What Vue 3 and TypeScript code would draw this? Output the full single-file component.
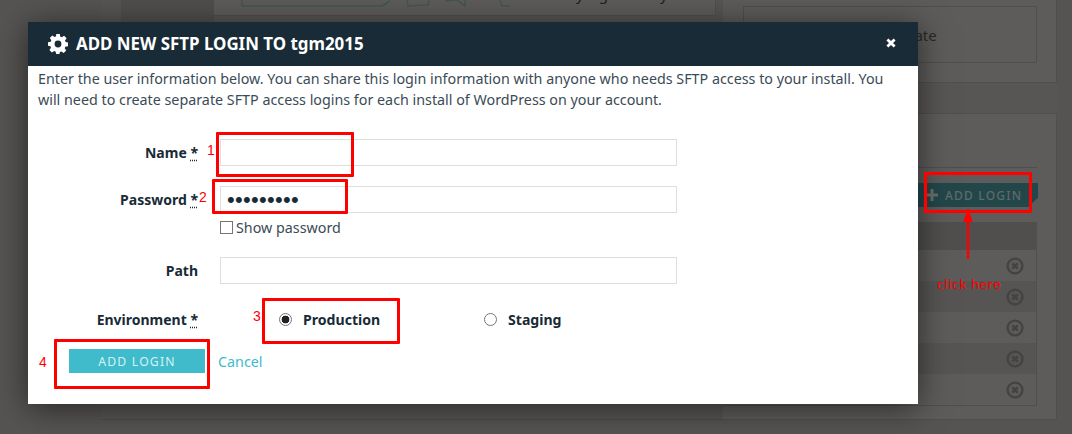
<script setup lang="ts">
const rows: number[] = [1, 2, 3, 4, 5]
</script>

<template>
  <div class="page">
    <div class="wrap">
      <aside class="sidebar"></aside>
      <main class="main">
        <div class="main-card">
          <svg class="drawing" width="310" height="8" viewBox="0 0 310 8" aria-hidden="true">
            <path d="M2 0V6H142L150 1M167 0L168 6L188 5L189 0M205 1L217 0L225 6V0M260 0L262 6H270" fill="none" stroke="#41584e" stroke-width="1.5" />
          </svg>
          <span class="cut-text"><i>y</i><i class="g">g</i><i class="y2">y</i></span>
        </div>
      </main>
      <div class="right">
        <section class="card card-top">
          <div class="inner-box"><span class="ghost">Update</span></div>
        </section>
        <section class="card card-logins">
          <div class="card-head"></div>
          <div class="add-row">
            <span class="add-bg">
              <svg width="12" height="12" viewBox="0 0 12 12" aria-hidden="true">
                <path d="M6 0V12M0 6H12" stroke="#6a6e6c" stroke-width="3" />
              </svg>
              ADD LOGIN
            </span>
          </div>
          <div class="table">
            <div class="thead"></div>
            <div v-for="r in rows" :key="r" class="trow" :class="{ alt: r % 2 === 0 }">
              <svg width="18" height="18" viewBox="0 0 18 18" aria-hidden="true">
                <circle cx="9" cy="9" r="7.4" fill="none" stroke="#444342" stroke-width="2.4" />
                <path d="M6.3 6.3L11.7 11.7M11.7 6.3L6.3 11.7" stroke="#444342" stroke-width="2.6" />
              </svg>
            </div>
          </div>
        </section>
      </div>
    </div>

    <div class="modal">
      <header class="modal-head">
        <svg class="gear" width="20" height="20" viewBox="0 0 20 20" aria-hidden="true">
          <path fill="#fff" fill-rule="evenodd" d="M8.2 0h3.6l.5 2.7 1.5.6 2.3-1.5 2.5 2.5-1.6 2.3.7 1.5 2.3.5v3.6l-2.7.5-.6 1.5 1.5 2.3-2.5 2.5-2.3-1.6-1.5.7-.5 2.3H8.2l-.5-2.7-1.5-.6-2.3 1.5-2.5-2.5 1.6-2.3-.7-1.5L0 11.8V8.2l2.7-.5.6-1.5-1.5-2.3 2.5-2.5 2.3 1.6 1.5-.7zM10 6.6a3.4 3.4 0 1 0 0 6.8 3.4 3.4 0 0 0 0-6.8z" />
        </svg>
        <h2 class="title">ADD NEW SFTP LOGIN TO tgm2015</h2>
        <svg class="close" width="10" height="10" viewBox="0 0 10 10" aria-hidden="true">
          <path d="M1.4 1.4L8.6 8.6M8.6 1.4L1.4 8.6" stroke="#fff" stroke-width="2.8" />
        </svg>
      </header>
      <div class="modal-body">
        <p class="intro">Enter the user information below. You can share this login information with anyone who needs SFTP access to your install. You will need to create separate SFTP access logins for each install of WordPress on your account.</p>
        <form class="form" @submit.prevent>
          <label class="lbl lbl-name">Name <abbr>*</abbr></label>
          <input class="field f-name" type="text" />
          <label class="lbl lbl-pass">Password <abbr>*</abbr></label>
          <div class="pass-cell">
            <input class="field f-pass" type="password" value="secretpw1" />
            <label class="show"><input type="checkbox" /><span>Show password</span></label>
          </div>
          <label class="lbl lbl-path">Path</label>
          <input class="field f-path" type="text" />
          <label class="lbl lbl-env">Environment <abbr>*</abbr></label>
          <div class="env">
            <label class="radio r-prod"><input type="radio" name="env" checked /><span>Production</span></label>
            <label class="radio"><input type="radio" name="env" /><span>Staging</span></label>
          </div>
        </form>
        <div class="actions">
          <button class="submit" type="button">ADD LOGIN</button>
          <a class="cancel">Cancel</a>
        </div>
      </div>
    </div>

    <div class="mark m1"></div>
    <div class="mark m2"></div>
    <div class="mark m3"></div>
    <div class="mark m4"></div>
    <div class="mark m5"></div>
    <span class="num n1">1</span>
    <span class="num n2">2</span>
    <span class="num n3">3</span>
    <span class="num n4">4</span>
    <svg class="arrow" width="12" height="52" viewBox="0 0 12 52" aria-hidden="true">
      <path d="M6 0L11 14H7.2V51H4.8V14H1z" fill="#f00" />
    </svg>
    <span class="click">click here</span>
  </div>
</template>

<style>
html, body { margin: 0; background: #555452; overflow: hidden; }
</style>

<style scoped>
.page {
  position: relative;
  width: 1072px;
  height: 434px;
  overflow: hidden;
  background: #555452;
  font-family: "Noto Sans", "Liberation Sans", sans-serif;
  padding-left: 100px;
  box-sizing: border-box;
}
.wrap {
  display: flex;
  width: 958px;
  height: 420px;
  box-sizing: border-box;
  padding-left: 20px;
  background: #575654;
  border-left: 1px solid #555452;
  border-right: 1px solid #555452;
  border-bottom: 1px solid #4d4c4a;
}
.sidebar {
  width: 93px;
  height: 404px;
  background: #504f4d;
  border-bottom: 1px solid #4d4c4a;
  box-sizing: border-box;
}
.main { width: 502px; }
.main-card {
  display: flex;
  height: 16px;
  box-sizing: border-box;
  overflow: hidden;
  border-bottom: 1px solid #504f4d;
  border-right: 1px solid #504f4d;
  background: #5d5c5a;
  padding-left: 26px;
}
.drawing { display: block; flex: none; }
.cut-text {
  display: flex;
  margin: -15px 0 0 26px;
  color: #1f1e1d;
  font-size: 15px;
  line-height: 18px;
}
.cut-text i { font-style: normal; }
.cut-text .g { margin-left: 15px; }
.cut-text .y2 { margin-left: 52px; }
.right { width: 341px; padding-left: 7px; box-sizing: border-box; }
.card {
  box-sizing: border-box;
  background: #5d5c5a;
  border-right: 1px solid #504f4d;
  border-bottom: 1px solid #504f4d;
}
.card-top {
  height: 83px;
  padding: 6px 19px 0 20px;
}
.inner-box {
  height: 57px;
  box-sizing: border-box;
  border: 1px solid #504f4d;
  display: flex;
  align-items: center;
  padding-left: 141px;
  color: #2a2928;
  font-size: 15px;
}
.ghost { white-space: nowrap; }
.card-logins {
  height: 307px;
  margin-top: 30px;
  border-top: 1px solid #504f4d;
  padding: 0 19px 0 0;
}
.card-head { height: 53px; border-bottom: 1px solid #504f4d; }
.add-row { display: flex; justify-content: flex-end; margin: 15px -1px 0 0; }
.add-bg {
  display: flex;
  align-items: center;
  gap: 7px;
  width: 121px;
  height: 24px;
  box-sizing: border-box;
  padding-left: 9px;
  background: #22474a;
  clip-path: polygon(0 0, 100% 0, 100% 60%, 92% 100%, 0 100%);
  color: #606a69;
  font-size: 12px;
  font-weight: 500;
  letter-spacing: 1.2px;
  white-space: nowrap;
}
.table { margin-top: 15px; border-bottom: 1px solid #504f4d; border-right: 1px solid #504f4d; }
.thead { height: 28px; background: #504f4d; }
.trow {
  height: 31px;
  display: flex;
  align-items: center;
  justify-content: flex-end;
  padding-right: 12px;
  background: #5d5c5a;
}
.trow.alt { background: #565553; }

.modal {
  position: absolute;
  left: 28px;
  top: 22px;
  width: 890px;
  height: 382px;
  background: #fff;
  box-shadow: 0 4px 30px rgba(0, 0, 0, 0.55);
  color: #182b36;
}
.modal-head {
  height: 44px;
  background: #182b36;
  display: flex;
  align-items: center;
  padding: 0 22px 0 20px;
  box-sizing: border-box;
}
.gear { flex: none; }
.title {
  margin: 0 0 0 8px;
  flex: 1;
  color: #fff;
  font-size: 16.9px;
  font-weight: 700;
  line-height: 44px;
  white-space: nowrap;
}
.close { flex: none; margin-top: -3px; }
.modal-body { padding: 2px 10px 0; }
.intro {
  margin: 0;
  width: 860px;
  font-size: 14.3px;
  line-height: 21px;
  color: #3b4b56;
}
.form {
  display: grid;
  grid-template-columns: 160px 457px;
  column-gap: 22px;
  margin-top: 29px;
  align-items: start;
}
.lbl {
  font-size: 14px;
  font-weight: 700;
  text-align: right;
  line-height: 28px;
  white-space: nowrap;
}
abbr { text-decoration: underline dotted; text-underline-offset: 2px; }
.field {
  display: block;
  width: 100%;
  height: 27px;
  box-sizing: border-box;
  border: 1px solid #dedede;
  background: #fff;
  padding: 0 6px;
  margin: 0;
  color: #182b36;
  font-size: 14px;
  outline: none;
}
.f-pass { font-size: 22px; letter-spacing: 0.3px; }
.f-name { margin-bottom: 20px; }
.pass-cell { margin-bottom: 21px; }
.show {
  display: flex;
  align-items: center;
  height: 18px;
  margin-top: 5px;
  font-size: 14.3px;
  color: #3b4b56;
}
.show input {
  appearance: none;
  width: 13px;
  height: 13px;
  margin: 0 3px 0 0;
  border: 1px solid #767676;
  background: #fff;
}
.f-path { margin-bottom: 22px; }
.env {
  display: flex;
  align-items: center;
  height: 26px;
  padding-left: 59px;
  font-size: 14.1px;
  font-weight: 700;
}
.radio { display: flex; align-items: center; }
.r-prod { width: 205px; }
.radio input {
  appearance: none;
  width: 13px;
  height: 13px;
  margin: 0 11px 0 0;
  border: 1px solid #767676;
  border-radius: 50%;
  background: #fff;
  box-sizing: border-box;
}
.radio input:checked { background: radial-gradient(circle, #222 0 3.6px, #fff 4.2px); }
.actions {
  display: flex;
  align-items: center;
  margin: 15px 0 0 31px;
}
.submit {
  width: 136px;
  height: 24px;
  border: 0;
  padding: 0;
  background: #40bbcb;
  color: #d8f1f4;
  font-family: inherit;
  font-size: 12.2px;
  letter-spacing: 1.2px;
}
.cancel { margin-left: 13px; color: #40bbcb; font-size: 14.3px; }

.mark {
  position: absolute;
  box-sizing: border-box;
  border: 3px solid #f00;
  border-radius: 1px;
}
.m1 { left: 216px; top: 132px; width: 138px; height: 45px; }
.m2 { left: 212px; top: 179px; width: 136px; height: 35px; }
.m3 { left: 262px; top: 298px; width: 138px; height: 46px; }
.m4 { left: 54px; top: 339px; width: 156px; height: 50px; }
.m5 { left: 924px; top: 172px; width: 108px; height: 41px; }
.num {
  position: absolute;
  color: #f00;
  font-family: "Liberation Sans", sans-serif;
  font-size: 14px;
  line-height: 16px;
}
.n1 { left: 207px; top: 142px; }
.n2 { left: 199px; top: 189px; }
.n3 { left: 253px; top: 308px; }
.n4 { left: 39px; top: 354px; }
.arrow { position: absolute; left: 962px; top: 208px; }
.click {
  position: absolute;
  left: 937px;
  top: 275px;
  color: #f00;
  font-family: Lato, sans-serif;
  font-size: 14px;
  line-height: 18px;
  letter-spacing: 0.6px;
  white-space: nowrap;
}
</style>
